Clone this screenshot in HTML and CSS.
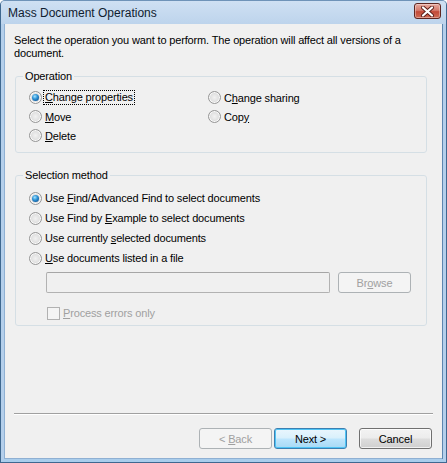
FILE: index.html
```html
<!DOCTYPE html>
<html>
<head>
<meta charset="utf-8">
<link rel="stylesheet" href="styles.css">
</head>
<body>
<div class="window">
  <div class="titlebar">
    <span class="title">Mass Document Operations</span>
    <span class="close">
      <svg width="15" height="11" viewBox="0 0 15 11">
        <path d="M3 1.5 L12 9.5 M12 1.5 L3 9.5" stroke="#5b1f1a" stroke-width="4" stroke-linecap="round"/>
        <path d="M3 1.5 L12 9.5 M12 1.5 L3 9.5" stroke="#ffffff" stroke-width="2.2" stroke-linecap="round"/>
      </svg>
    </span>
  </div>
  <div class="client">
    <p class="intro">Select the operation you want to perform. The operation will affect all versions of a<br>document.</p>

    <fieldset class="group op">
      <legend>Operation</legend>
      <div class="op-grid">
        <label class="opt"><span class="radio checked"></span><span class="focus"><u>C</u>hange properties</span></label>
        <label class="opt"><span class="radio"></span><span>C<u>h</u>ange sharing</span></label>
        <label class="opt"><span class="radio"></span><span><u>M</u>ove</span></label>
        <label class="opt"><span class="radio"></span><span>Cop<u>y</u></span></label>
        <label class="opt"><span class="radio"></span><span><u>D</u>elete</span></label>
      </div>
    </fieldset>

    <fieldset class="group sel">
      <legend>Selection method</legend>
      <div class="sel-list">
        <label class="opt row"><span class="radio checked"></span><span>Use <u>F</u>ind/Advanced Find to select documents</span></label>
        <label class="opt row"><span class="radio"></span><span>Use Find by <u>E</u>xample to select documents</span></label>
        <label class="opt row"><span class="radio"></span><span>Use currently <u>s</u>elected documents</span></label>
        <label class="opt row"><span class="radio"></span><span><u>U</u>se documents listed in a file</span></label>
      </div>
      <div class="file-row">
        <div class="file-input"></div>
        <div class="btn disabled browse"><span>Br<u>o</u>wse</span></div>
      </div>
      <label class="check-row"><span class="checkbox"></span><span class="dis"><u>P</u>rocess errors only</span></label>
    </fieldset>

    <div class="spacer"></div>
    <div class="sep"></div>
    <div class="buttons">
      <div class="btn disabled"><span>&lt; <u>B</u>ack</span></div>
      <div class="btn default"><span>Next &gt;</span></div>
      <div class="btn cancel"><span>Cancel</span></div>
    </div>
  </div>
</div>
</body>
</html>
```

FILE: styles.css
```css
* { box-sizing: border-box; }
html, body { margin: 0; padding: 0; }
body {
  width: 447px;
  height: 463px;
  background: #ffffff;
  font-family: "Liberation Sans", Arial, sans-serif;
  font-size: 11px;
  letter-spacing: -0.15px;
  color: #000;
}
.window {
  width: 447px;
  height: 463px;
  border: 1px solid #3f6890;
  border-top-color: #6f93b8;
  border-radius: 5px 5px 0 0;
  display: flex;
  flex-direction: column;
  background: #bcd3ec;
  overflow: hidden;
}
.titlebar {
  height: 23px;
  flex: none;
  display: flex;
  align-items: center;
  justify-content: space-between;
  padding: 0 5px 0 7px;
  background: linear-gradient(#cfe0f3, #bdd4ec);
}
.title {
  font-size: 12px;
  letter-spacing: 0;
  color: #10202f;
  margin-top: 1px;
}
.close {
  width: 27px;
  height: 16px;
  margin-top: -3px;
  border: 1px solid #5e2621;
  border-radius: 3px;
  background: linear-gradient(#e8a99e 0%, #d57c6e 45%, #c24a38 55%, #cf6b55 100%);
  box-shadow: inset 0 0 0 1px rgba(255,255,255,0.35);
  display: flex;
  align-items: center;
  justify-content: center;
}
.close svg { display: block; }
.client {
  flex: 1;
  display: flex;
  flex-direction: column;
  background: #f0f0f0;
  border-left: 3px solid #b4cfeb;
  border-right: 3px solid #b4cfeb;
  border-bottom: 3px solid #a9cdec;
  box-shadow: inset 1px 0 #8fb0d3, inset -1px 0 #5d86b0, inset 0 -1px #8fb0d3;
}
.intro {
  margin: 10px 0 0 10px;
  line-height: 13px;
}
.group {
  margin: 10px 16px 0 11px;
  padding: 0 10px 7px 13px;
  border: 1px solid #d5dfe5;
  border-radius: 3px;
  min-width: 0;
}
.group legend {
  padding: 0 2px;
  margin-left: -6px;
  line-height: 13px;
}
.op-grid {
  margin-top: 5px;
  display: grid;
  grid-template-columns: 179px 1fr;
  grid-auto-rows: 19px;
}
.opt {
  display: flex;
  align-items: center;
  gap: 3px;
  white-space: nowrap;
}
.opt.row { height: 20px; }
.radio {
  flex: none;
  position: relative;
  width: 13px;
  height: 13px;
  border-radius: 50%;
  border: 1px solid #969696;
  background: radial-gradient(circle at 50% 50%, #f2f2f2 0%, #e3e3e3 45%, #c8c8c8 100%);
  box-shadow: inset 0 0 0 1px #fafafa;
}
.radio.checked::after {
  content: "";
  position: absolute;
  left: 2px;
  top: 2px;
  width: 7px;
  height: 7px;
  border-radius: 50%;
  background: radial-gradient(circle at 40% 35%, #a6e4ff 0%, #3296d8 40%, #0f5a9c 80%, #0a3f70 100%);
}
.focus {
  outline: 1px dotted #000;
  outline-offset: 0;
  padding: 0 1px;
  margin-left: -1px;
  line-height: 13px;
}
.sel { margin-top: 16px; padding-bottom: 4px; }
.sel-list { margin-top: 6px; }
.file-row {
  display: flex;
  gap: 8px;
  margin: 4px 0 0 17px;
}
.file-input {
  width: 284px;
  height: 21px;
  border: 1px solid #b2b2b2;
  border-top-color: #a6a6a6;
  border-radius: 2px;
  background: #f0f0f0;
}
.btn {
  width: 73px;
  height: 21px;
  display: flex;
  align-items: center;
  justify-content: center;
  border: 1px solid #707070;
  border-radius: 3px;
  background: linear-gradient(#f3f3f3 0%, #ececec 48%, #dddddd 52%, #cfcfcf 100%);
  box-shadow: inset 0 0 0 1px rgba(255,255,255,0.7);
}
.btn span { white-space: pre; }
.btn.disabled {
  border-color: #adb2b5;
  background: #f4f4f4;
  color: #a0a0a0;
  box-shadow: none;
}
.check-row {
  display: flex;
  align-items: center;
  gap: 3px;
  height: 16px;
  margin: 12px 0 0 18px;
}
.checkbox {
  width: 13px;
  height: 13px;
  border: 1px solid #b1b1b1;
  background: #f4f4f4;
}
.dis { color: #a0a0a0; }
.spacer { flex: 1; }
.sep {
  margin: 0 10px 0 10px;
  border-top: 1px solid #a0a0a0;
  border-bottom: 1px solid #ffffff;
}
.buttons {
  display: flex;
  justify-content: flex-end;
  gap: 2px;
  margin: 13px 11px 10px 0;
}
.btn.default {
  border-color: #3c7fb1;
  background: linear-gradient(#eaf6fd 0%, #d9f0fc 48%, #bee6fd 52%, #a7d9f5 100%);
  box-shadow: inset 0 0 0 1px #4fc4f5;
}
.btn.cancel { margin-left: 10px; }
u { text-decoration: underline; text-underline-offset: 1px; }
```
